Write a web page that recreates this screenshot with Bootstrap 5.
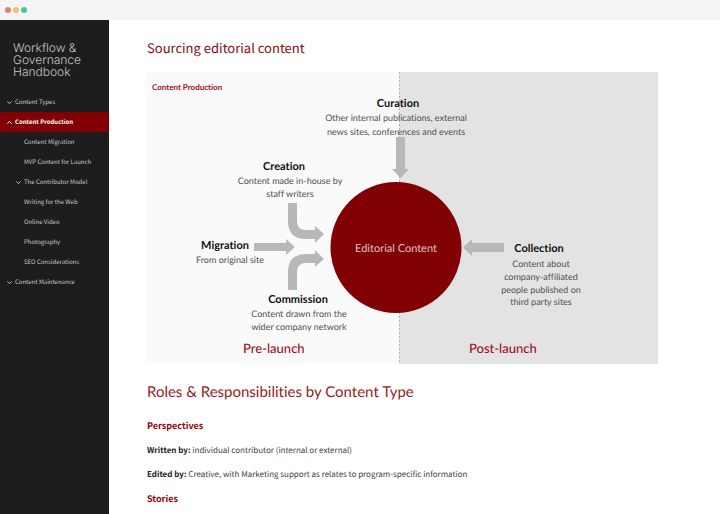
<!DOCTYPE html>
<html lang="en">
<head>
<meta charset="utf-8">
<meta name="viewport" content="width=device-width, initial-scale=1">
<title>Workflow &amp; Governance Handbook</title>
<link href="https://cdn.jsdelivr.net/npm/bootstrap@5.3.0/dist/css/bootstrap.min.css" rel="stylesheet">
<style>
  :root { --brand: #800004; --ink: #1d1d1d; }
  body { font-family: "Noto Sans CJK SC", "Open Sans", sans-serif; font-size: 8px; line-height: 12px; color: #3c3c3c; text-rendering: geometricPrecision; }
  .titlebar { height: 20px; padding-left: 5px; gap: 2px; background: #f5f5f5; }
  .dot { width: 6px; height: 6px; }
  .dot-close { background: #e67c80; }
  .dot-min { background: #efc368; }
  .dot-max { background: #4fc29b; }
  .sidebar { width: 109px; background: var(--ink); }
  .handbook { font-family: Inter, sans-serif; font-weight: 300; font-size: 12px; line-height: 12px; color: #c4c4c4; padding: 22px 12px 14px 13px; }
  .side-link { height: 20px; padding-left: 7px; gap: 3px; font-size: 6px; line-height: 20px; color: #c8c8c8; white-space: nowrap; }
  .side-link:hover { color: #fff; }
  .side-link.current { background: var(--brand); color: #fff; font-weight: 700; }
  .side-link.sub { padding-left: 24px; }
  .side-link.sub-open { padding-left: 16px; }
  .chev { width: 5px; height: 5px; fill: none; stroke: currentColor; stroke-width: 1; }
  .page { padding: 18px 62px 8px 36px; }
  .page h1 { font-size: 13px; line-height: 20px; font-weight: 400; color: #850b0e; margin: 0 2px 14px; }
  .page h2 { font-family: Lato, sans-serif; font-size: 15px; line-height: 20px; font-weight: 400; font-variant-ligatures: none; color: #971c22; margin: 18px 2px 18px; }
  .page h3 { font-size: 9px; line-height: 12px; font-weight: 700; color: #8b0508; margin: 0 2px 13px; }
  .page p { margin: 0 2px 12px; }
  .page strong { color: #222; }
  .diagram text { font-family: Lato, sans-serif; font-variant-ligatures: none; }
  .diagram .zone { font-size: 13px; fill: #a01028; font-weight: 500; }
  .diagram .caption { font-size: 8px; font-weight: 700; fill: #a01028; }
  .diagram .name { font-size: 11px; font-weight: 700; fill: #111; text-anchor: middle; }
  .diagram .note { font-size: 9px; fill: #505050; text-anchor: middle; }
  .diagram .hub { font-size: 11px; fill: #e0c0c0; text-anchor: middle; }
</style>
<script src="https://cdn.jsdelivr.net/npm/bootstrap@5.3.0/dist/js/bootstrap.bundle.min.js"></script>
</head>
<body class="d-flex flex-column min-vh-100 bg-white">
<header class="titlebar d-flex align-items-center">
  <span class="dot dot-close rounded-circle"></span>
  <span class="dot dot-min rounded-circle"></span>
  <span class="dot dot-max rounded-circle"></span>
</header>
<div class="d-flex flex-grow-1">
  <aside class="sidebar flex-shrink-0">
    <div class="handbook">Workflow &amp; Governance Handbook</div>
    <nav class="nav flex-column flex-nowrap" aria-label="Handbook">
      <a class="side-link d-flex align-items-center text-decoration-none" href="#"><svg class="chev" viewBox="0 0 5 5" aria-hidden="true"><path d="M.3 1.4 2.5 3.6 4.7 1.4"/></svg>Content Types</a>
      <a class="side-link current d-flex align-items-center text-decoration-none" href="#" aria-current="page"><svg class="chev" viewBox="0 0 5 5" aria-hidden="true"><path d="M.3 3.6 2.5 1.4 4.7 3.6"/></svg>Content Production</a>
      <a class="side-link sub d-flex align-items-center text-decoration-none" href="#">Content Migration</a>
      <a class="side-link sub d-flex align-items-center text-decoration-none" href="#">MVP Content for Launch</a>
      <a class="side-link sub-open d-flex align-items-center text-decoration-none" href="#"><svg class="chev" viewBox="0 0 5 5" aria-hidden="true"><path d="M.3 1.4 2.5 3.6 4.7 1.4"/></svg>The Contributor Model</a>
      <a class="side-link sub d-flex align-items-center text-decoration-none" href="#">Writing for the Web</a>
      <a class="side-link sub d-flex align-items-center text-decoration-none" href="#">Online Video</a>
      <a class="side-link sub d-flex align-items-center text-decoration-none" href="#">Photography</a>
      <a class="side-link sub d-flex align-items-center text-decoration-none" href="#">SEO Considerations</a>
      <a class="side-link d-flex align-items-center text-decoration-none" href="#"><svg class="chev" viewBox="0 0 5 5" aria-hidden="true"><path d="M.3 1.4 2.5 3.6 4.7 1.4"/></svg>Content Maintenance</a>
    </nav>
  </aside>
  <main class="page flex-grow-1">
    <h1>Sourcing editorial content</h1>
    <svg class="diagram d-block w-100" viewBox="0 0 513 292" role="img" aria-label="Sources of editorial content before and after launch">
      <rect width="255" height="292" fill="#fafafa"/>
      <rect x="254" width="259" height="292" fill="#e3e3e3"/>
      <path d="M254.500 0V292" stroke="#b4b4b4" stroke-dasharray="2 2"/>
      <g fill="#b8b8b8">
        <path d="M251 65h9v32h4l-8.500 9-8.500-9h4z"/>
        <path d="M109 171h32v-4l9 8-9 8v-4h-32z"/>
        <path d="M359 171h-32v-4l-9 8.500 9 8.500v-4h32z"/>
        <path d="M143 131h9v18q0 9 9 9h9v-4l9 8-9 9v-4h-9q-18 0-18-18z"/>
        <path d="M143 218h9v-18q0-9 9-9h9v4l9-8-9-9v4h-9q-18 0-18 18z"/>
      </g>
      <circle cx="251" cy="175.500" r="65.500" fill="#800004"/>
      <text class="hub" x="251" y="180">Editorial Content</text>
      <text class="caption" x="7" y="18">Content Production</text>
      <text class="name" x="253" y="35">Curation</text>
      <text class="note" x="251" y="49">Other internal publications, external</text>
      <text class="note" x="251" y="63">news sites, conferences and events</text>
      <text class="name" x="139" y="98">Creation</text>
      <text class="note" x="145" y="112">Content made in-house by</text>
      <text class="note" x="145" y="125">staff writers</text>
      <text class="name" x="80" y="177">Migration</text>
      <text class="note" x="85" y="191">From original site</text>
      <text class="name" x="153" y="231">Commission</text>
      <text class="note" x="154" y="245">Content drawn from the</text>
      <text class="note" x="154" y="258">wider company network</text>
      <text class="name" x="394" y="180">Collection</text>
      <text class="note" x="396" y="195">Content about</text>
      <text class="note" x="396" y="208">company-affiliated</text>
      <text class="note" x="396" y="221">people published on</text>
      <text class="note" x="396" y="233">third party sites</text>
      <text class="zone" x="98" y="281">Pre-launch</text>
      <text class="zone" x="324" y="281">Post-launch</text>
    </svg>
    <h2>Roles &amp; Responsibilities by Content Type</h2>
    <h3>Perspectives</h3>
    <p><strong>Written by:</strong> individual contributor (internal or external)</p>
    <p><strong>Edited by:</strong> Creative, with Marketing support as relates to program-specific information</p>
    <h3>Stories</h3>
  </main>
</div>
</body>
</html>
